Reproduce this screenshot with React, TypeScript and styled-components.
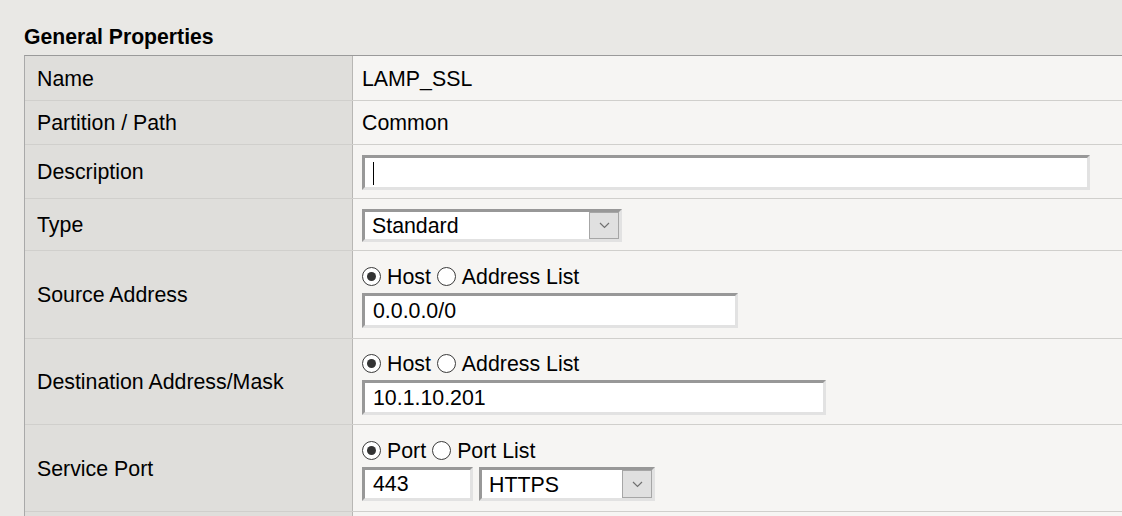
import React from 'react';
import styled, { createGlobalStyle } from 'styled-components';

const GlobalStyle = createGlobalStyle`
  html, body {
    margin: 0;
    padding: 0;
    background: #e9e8e5;
    overflow: hidden;
  }
  body {
    font-family: "Liberation Sans", Arial, sans-serif;
    color: #000;
  }
`;

const Page = styled.div`
  padding: 25px 0 0 24px;
  width: 1160px;
`;

const Heading = styled.h2`
  margin: 0 0 6px;
  font-size: 21.2px;
  line-height: 24px;
  font-weight: bold;
  color: #000;
`;

const Table = styled.div`
  width: 1110px;
  border-top: 1px solid #9a9a9a;
  border-left: 1px solid #a9a9a9;
`;

const Row = styled.div<{ $h: number }>`
  display: grid;
  grid-template-columns: 328px 1fr;
  height: ${(p) => p.$h}px;
  box-sizing: border-box;
  border-bottom: 1px solid #d0cfcc;
`;

const Label = styled.div`
  box-sizing: border-box;
  background: #dfdedb;
  border-right: 1px solid #b8b7b4;
  padding: 2px 0 0 12px;
  display: flex;
  align-items: center;
  font-size: 21.33px;
`;

const Value = styled.div<{ $stack?: boolean }>`
  background: #f6f5f3;
  padding-left: 9px;
  padding-top: 2px;
  display: flex;
  flex-direction: ${(p) => (p.$stack ? 'column' : 'row')};
  justify-content: ${(p) => (p.$stack ? 'center' : 'flex-start')};
  align-items: ${(p) => (p.$stack ? 'flex-start' : 'center')};
  gap: 4px;
  font-size: 21.33px;
`;

const Field = styled.div<{ $w: number; $h?: number }>`
  box-sizing: border-box;
  width: ${(p) => p.$w}px;
  height: ${(p) => p.$h ?? 35}px;
  border: 3px solid;
  border-color: #989898 #e2e2e2 #e2e2e2 #989898;
  background: #fff;
  display: flex;
  align-items: center;
  padding: 1px 0 0 8px;
  font-size: 21.33px;
  color: #000;
`;

const Caret = styled.span`
  display: inline-block;
  width: 1px;
  height: 23px;
  background: #000;
`;

const SelectBox = styled.div<{ $w: number; $h: number }>`
  box-sizing: border-box;
  width: ${(p) => p.$w}px;
  height: ${(p) => p.$h}px;
  border: 3px solid;
  border-color: #989898 #e2e2e2 #e2e2e2 #989898;
  background: #fff;
  display: flex;
  align-items: stretch;
  font-size: 21.33px;
`;

const SelectText = styled.div`
  flex: 1;
  display: flex;
  align-items: center;
  padding: 2px 0 0 7px;
`;

const DropButton = styled.div`
  box-sizing: border-box;
  width: 30px;
  background: #e0e0e0;
  border: 1px solid #a6a6a6;
  display: flex;
  align-items: center;
  justify-content: center;
`;

const InlineFields = styled.div`
  display: flex;
  gap: 6px;
`;

const RadioLine = styled.div`
  display: flex;
  align-items: center;
  height: 26px;
  gap: 6px;
`;

const Option = styled.label`
  display: flex;
  align-items: center;
  gap: 6px;
  padding-top: 1px;
  font-size: 21.33px;
  line-height: 26px;
`;

const RadioMark = styled.span<{ $on?: boolean }>`
  box-sizing: border-box;
  width: 19px;
  height: 19px;
  border-radius: 50%;
  border: 1.5px solid #3a3a3a;
  background: #fff;
  display: flex;
  align-items: center;
  justify-content: center;
  &::after {
    content: '';
    display: ${(p) => (p.$on ? 'block' : 'none')};
    width: 9px;
    height: 9px;
    border-radius: 50%;
    background: #333;
  }
`;

const Chevron = () => (
  <svg width="11" height="7" viewBox="0 0 11 7">
    <polyline points="1,1 5.5,5.5 10,1" fill="none" stroke="#707070" strokeWidth="1.2" />
  </svg>
);

const Select = ({ w, h, text }: { w: number; h: number; text: string }) => (
  <SelectBox $w={w} $h={h}>
    <SelectText>{text}</SelectText>
    <DropButton>
      <Chevron />
    </DropButton>
  </SelectBox>
);

const Radios = ({ a, b }: { a: string; b: string }) => (
  <RadioLine>
    <Option>
      <RadioMark $on />
      {a}
    </Option>
    <Option>
      <RadioMark />
      {b}
    </Option>
  </RadioLine>
);

export default function App() {
  return (
    <>
      <GlobalStyle />
      <Page>
        <Heading>General Properties</Heading>
        <Table>
          <Row $h={45}>
            <Label>Name</Label>
            <Value>LAMP_SSL</Value>
          </Row>
          <Row $h={44}>
            <Label>Partition / Path</Label>
            <Value>Common</Value>
          </Row>
          <Row $h={54}>
            <Label>Description</Label>
            <Value>
              <Field $w={728}>
                <Caret />
              </Field>
            </Value>
          </Row>
          <Row $h={52}>
            <Label>Type</Label>
            <Value>
              <Select w={260} h={33} text="Standard" />
            </Value>
          </Row>
          <Row $h={88}>
            <Label>Source Address</Label>
            <Value $stack>
              <Radios a="Host" b="Address List" />
              <Field $w={376}>0.0.0.0/0</Field>
            </Value>
          </Row>
          <Row $h={86}>
            <Label>Destination Address/Mask</Label>
            <Value $stack>
              <Radios a="Host" b="Address List" />
              <Field $w={464}>10.1.10.201</Field>
            </Value>
          </Row>
          <Row $h={87}>
            <Label>Service Port</Label>
            <Value $stack>
              <Radios a="Port" b="Port List" />
              <InlineFields>
                <Field $w={111} $h={34}>443</Field>
                <Select w={176} h={34} text="HTTPS" />
              </InlineFields>
            </Value>
          </Row>
          <Row $h={60}>
            <Label />
            <Value />
          </Row>
        </Table>
      </Page>
    </>
  );
}
